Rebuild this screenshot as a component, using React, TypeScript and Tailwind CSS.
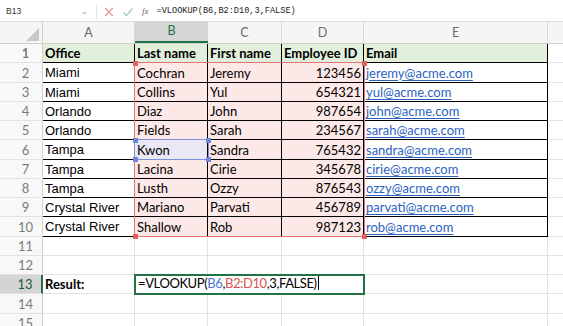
import React from "react";

const calibri = "font-['Lato',sans-serif]";
const arial = "font-['Liberation_Sans',Arial,sans-serif]";

const ROW_H = 19.25;

const people = [
  ["Miami", "Cochran", "Jeremy", "123456", "jeremy@acme.com"],
  ["Miami", "Collins", "Yul", "654321", "yul@acme.com"],
  ["Orlando", "Diaz", "John", "987654", "john@acme.com"],
  ["Orlando", "Fields", "Sarah", "234567", "sarah@acme.com"],
  ["Tampa", "Kwon", "Sandra", "765432", "sandra@acme.com"],
  ["Tampa", "Lacina", "Cirie", "345678", "cirie@acme.com"],
  ["Tampa", "Lusth", "Ozzy", "876543", "ozzy@acme.com"],
  ["Crystal River", "Mariano", "Parvati", "456789", "parvati@acme.com"],
  ["Crystal River", "Shallow", "Rob", "987123", "rob@acme.com"],
];

const RowHeader = ({ n, active }: { n: number; active?: boolean }) => (
  <div
    className={`w-[43px] shrink-0 flex items-end justify-center pl-[9px] text-[13px] leading-[17px] ${calibri} border-b border-[#e3e3e3] ${
      active
        ? "bg-[#d4d4d4] text-[#1d5c38] border-r-2 border-r-[#217346]"
        : "bg-[#f8f8f8] text-[#7a7a7a] border-r border-r-[#d0d0d0]"
    }`}
  >
    {n}
  </div>
);

const Handle = ({ x, y, color }: { x: number; y: number; color: string }) => (
  <div
    className={`absolute w-[5px] h-[5px] ${color}`}
    style={{ left: x - 2.5, top: y - 2.5 }}
  />
);

const App = () => {
  return (
    <div className="w-[563px] h-[326px] overflow-hidden bg-white">
      {/* formula bar */}
      <div className="flex items-center h-[22px] pt-[2px] border-b border-[#dcdcdc] bg-white">
        <div className={`w-[96px] shrink-0 flex items-center justify-between pl-[6px] pr-[8px] text-[8.5px] text-[#333] ${arial}`}>
          <span>B13</span>
          <span className="text-[#999] text-[8px]">⌄</span>
        </div>
        <div className="w-px h-[14px] bg-[#e2e2e2]" />
        <svg width="12" height="12" viewBox="0 0 12 12" className="ml-[6px]">
          <path d="M2 2 L10 10 M10 2 L2 10" stroke="#e49a9a" strokeWidth="1.3" />
        </svg>
        <svg width="12" height="12" viewBox="0 0 12 12" className="ml-[7px]">
          <path d="M1.5 6.5 L4.5 9.5 L10.5 2.5" stroke="#9fcfb0" strokeWidth="1.3" fill="none" />
        </svg>
        <span className="ml-[8px] text-[9px] italic text-[#666] font-['Liberation_Serif',serif]">fx</span>
        <span className="ml-[8px] text-[8.6px] text-[#222] font-['Liberation_Mono',monospace]">
          =VLOOKUP(B6,B2:D10,3,FALSE)
        </span>
      </div>

      {/* column headers */}
      <div className={`flex h-[22px] bg-[#f5f5f5] border-b border-[#d0d0d0] text-[12.5px] text-[#6b6b6b] ${calibri}`}>
        <div className="w-[43px] shrink-0 border-r border-[#d0d0d0] flex items-end justify-end pr-[3px] pb-[2px]">
          <svg width="13" height="13" viewBox="0 0 13 13">
            <polygon points="13,0 13,13 0,13" fill="#c9c9c9" />
          </svg>
        </div>
        <div className="w-[92px] shrink-0 border-r border-[#dadada] flex items-end justify-center">A</div>
        <div className="w-[73px] shrink-0 bg-[#d5d5d5] border-b-2 border-[#217346] text-[#217346] flex items-end justify-center">B</div>
        <div className="w-[74px] shrink-0 border-r border-[#dadada] flex items-end justify-center">C</div>
        <div className="w-[82px] shrink-0 border-r border-[#dadada] flex items-end justify-center">D</div>
        <div className="w-[184px] shrink-0 border-r border-[#dadada] flex items-end justify-center">E</div>
        <div className="flex-1" />
      </div>

      {/* grid */}
      <div className="relative">
        {/* row 1 */}
        <div className={`flex h-[19.25px] text-[13px] leading-[17px] font-bold text-black ${calibri}`}>
          <RowHeader n={1} />
          <div className="w-[92px] shrink-0 bg-[#e2efda] border-b border-r border-black flex items-end px-[2px]">Office</div>
          <div className="w-[73px] shrink-0 bg-[#e2efda] border-b border-r border-black flex items-end px-[2px]">Last name</div>
          <div className="w-[74px] shrink-0 bg-[#e2efda] border-b border-r border-black flex items-end px-[2px]">First name</div>
          <div className="w-[82px] shrink-0 bg-[#e2efda] border-b border-r border-black flex items-end px-[2px]">Employee ID</div>
          <div className="w-[184px] shrink-0 bg-[#e2efda] border-b border-r border-black flex items-end px-[2px]">Email</div>
          <div className="flex-1 border-b border-[#e3e3e3]" />
        </div>

        {/* rows 2-10 */}
        {people.map((p, i) => {
          const kwon = i === 4;
          return (
            <div key={p[4]} className="flex h-[19.25px] text-[13px] leading-[17px] text-black">
              <RowHeader n={i + 2} />
              <div className={`w-[92px] shrink-0 border-b border-r border-black flex items-start pt-px px-[2px] ${arial}`}>
                {p[0]}
              </div>
              <div
                className={`w-[73px] shrink-0 border-b border-r border-black flex items-end px-[2px] ${calibri} ${
                  kwon ? "bg-[#ebe8f6]" : "bg-[#fce9e7]"
                }`}
              >
                {p[1]}
              </div>
              <div className={`w-[74px] shrink-0 bg-[#fce9e7] border-b border-r border-black flex items-end px-[2px] ${calibri}`}>
                {p[2]}
              </div>
              <div className={`w-[82px] shrink-0 bg-[#fce9e7] border-b border-r border-black flex items-end justify-end px-[2px] ${calibri}`}>
                {p[3]}
              </div>
              <div className={`w-[184px] shrink-0 border-b border-r border-black flex items-end px-[2px] ${calibri}`}>
                <span className="text-[#2c62bf] underline underline-offset-[2px] decoration-[#2c62bf]">{p[4]}</span>
              </div>
              <div className="flex-1 border-b border-[#e3e3e3]" />
            </div>
          );
        })}

        {/* rows 11-15 */}
        {[11, 12, 13, 14, 15].map((n) => (
          <div key={n} className={`flex h-[19.25px] text-[13px] leading-[17px] text-black ${calibri}`}>
            <RowHeader n={n} active={n === 13} />
            <div className="w-[92px] shrink-0 border-b border-r border-[#e3e3e3] flex items-end px-[2px] font-bold">
              {n === 13 ? "Result:" : ""}
            </div>
            <div className="w-[73px] shrink-0 border-b border-r border-[#e3e3e3]" />
            <div className="w-[74px] shrink-0 border-b border-r border-[#e3e3e3]" />
            <div className="w-[82px] shrink-0 border-b border-r border-[#e3e3e3]" />
            <div className="w-[184px] shrink-0 border-b border-r border-[#e3e3e3]" />
            <div className="flex-1 border-b border-[#e3e3e3]" />
          </div>
        ))}

        {/* range B2:D10 highlight */}
        <div
          className="absolute border-[1.5px] border-[#e57373]"
          style={{ left: 134, top: ROW_H - 1, width: 231, height: ROW_H * 9 + 1.5 }}
        />
        <Handle x={135} y={ROW_H} color="bg-[#e06060]" />
        <Handle x={364} y={ROW_H} color="bg-[#e06060]" />
        <Handle x={135} y={ROW_H * 10} color="bg-[#e06060]" />
        <Handle x={364} y={ROW_H * 10} color="bg-[#e06060]" />

        {/* B6 highlight */}
        <div
          className="absolute border-[1.5px] border-[#7f90da]"
          style={{ left: 134, top: ROW_H * 5 - 1, width: 75, height: ROW_H + 1.5 }}
        />
        <Handle x={135} y={ROW_H * 5} color="bg-[#7086d6]" />
        <Handle x={208} y={ROW_H * 5} color="bg-[#7086d6]" />
        <Handle x={135} y={ROW_H * 6} color="bg-[#7086d6]" />
        <Handle x={208} y={ROW_H * 6} color="bg-[#7086d6]" />

        {/* editing cell B13 */}
        <div
          className={`absolute bg-white border-2 border-[#217346] flex items-end pl-[2px] pb-[1px] text-[13px] leading-[17px] tracking-[-0.4px] text-black ${calibri}`}
          style={{ left: 134, top: ROW_H * 12 - 1, width: 231, height: ROW_H + 2 }}
        >
          <span>=VLOOKUP(</span>
          <span className="text-[#4a78d0]">B6</span>
          <span>,</span>
          <span className="text-[#d9534f]">B2:D10</span>
          <span>,3,FALSE)</span>
          <span className="w-px h-[14px] bg-black mb-[2px] ml-px" />
        </div>
      </div>
    </div>
  );
};

export default App;
